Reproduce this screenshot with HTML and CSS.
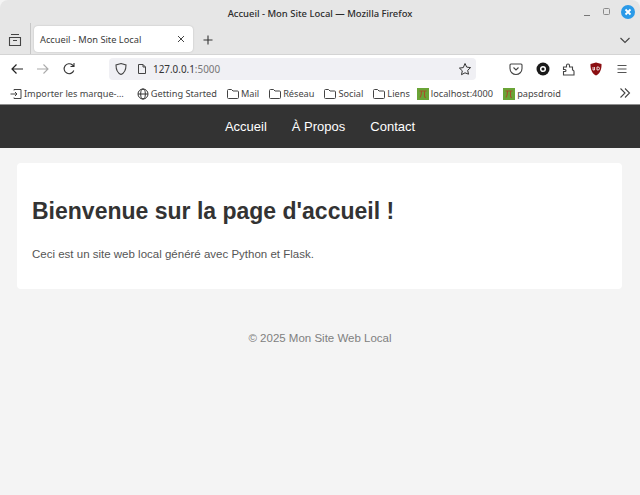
FILE: index.html
```html
<!DOCTYPE html>
<html lang="fr">
<head>
<meta charset="utf-8">
<title>Accueil - Mon Site Local</title>
<link rel="stylesheet" href="styles.css">
</head>
<body>
<div class="chrome">
  <div class="titlebar">
    <span class="title">Accueil - Mon Site Local — Mozilla Firefox</span>
    <div class="winctl">
      <svg class="ico-min" width="10" height="10" viewBox="0 0 10 10"><path d="M1 8.500h6" stroke="#777" fill="none"/></svg>
      <svg class="ico-max" width="10" height="10" viewBox="0 0 10 10"><rect x="1.500" y="1.500" width="6" height="6" rx="1" stroke="#8a8a8a" fill="none"/></svg>
      <svg class="ico-close" width="14" height="14" viewBox="0 0 14 14"><circle cx="7" cy="7" r="7" fill="#2a9ae8"/><path d="M4.500 4.500l5 5M9.500 4.500l-5 5" stroke="#fff" stroke-width="1.800" fill="none"/></svg>
    </div>
  </div>
  <div class="tabbar">
    <svg class="ico-view" width="14" height="14" viewBox="0 0 14 14"><path d="M3 1.500h8M1.500 4.500h11v8h-11zM5 7.500h4" stroke="#444" stroke-width="1.100" fill="none"/></svg>
    <span class="sep"></span>
    <div class="tab">
      <span class="tab-title">Accueil - Mon Site Local</span>
      <svg width="8" height="8" viewBox="0 0 8 8"><path d="M1 1l6 6M7 1l-6 6" stroke="#444" fill="none"/></svg>
    </div>
    <svg class="ico-plus" width="12" height="12" viewBox="0 0 12 12"><path d="M6 1.500v9M1.500 6h9" stroke="#333" stroke-width="1.100" fill="none"/></svg>
    <svg class="ico-chev" width="12" height="12" viewBox="0 0 12 12"><path d="M1.500 4l4.500 4.500 4.500-4.500" stroke="#444" stroke-width="1.100" fill="none"/></svg>
  </div>
  <div class="toolbar">
    <svg class="nav-ico" width="14" height="14" viewBox="0 0 14 14"><path d="M13 7H2M6.500 2.500L2 7l4.500 4.500" stroke="#222" stroke-width="1.200" fill="none"/></svg>
    <svg class="nav-ico" width="14" height="14" viewBox="0 0 14 14"><path d="M1 7h11M7.500 2.500L12 7l-4.500 4.500" stroke="#aaa" stroke-width="1.100" fill="none"/></svg>
    <svg class="nav-ico" width="14" height="14" viewBox="0 0 14 14"><path d="M11.800 8.500A5 5 0 1 1 10.500 3L12 4.500M12 1v3.500H8.500" stroke="#333" stroke-width="1.100" fill="none"/></svg>
    <div class="urlbar">
      <svg width="14" height="14" viewBox="0 0 14 14"><path d="M7 1.500l5 1.500c0 5-1.500 8-5 9.500C3.500 11 2 8 2 3z" stroke="#444" stroke-width="1.100" fill="none"/></svg>
      <svg width="12" height="12" viewBox="0 0 12 12"><path d="M2.500 1.500h4.500l2.500 2.500v6.500h-7zM7 1.500v2.500h2.500" stroke="#444" fill="none"/></svg>
      <span class="url">127.0.0.1<span class="port">:5000</span></span>
      <svg class="ico-star" width="14" height="14" viewBox="0 0 14 14"><path d="M7 1.500l1.700 3.600 3.900.5-2.900 2.700.8 3.900L7 10.800l-3.500 1.900.8-3.900-2.900-2.700 3.900-.5z" stroke="#333" fill="none"/></svg>
    </div>
    <div class="tools">
      <svg width="14" height="14" viewBox="0 0 14 14"><path d="M2 2h10a1 1 0 0 1 1 1v3.500a6 6 0 0 1-12 0V3a1 1 0 0 1 1-1zM4.500 5.500L7 8l2.500-2.500" stroke="#444" stroke-width="1.100" fill="none"/></svg>
      <svg width="14" height="14" viewBox="0 0 14 14"><circle cx="7" cy="7" r="6.500" fill="#1a1a1a"/><circle cx="7" cy="7" r="2.300" fill="none" stroke="#fff" stroke-width="1.500"/></svg>
      <svg width="14" height="14" viewBox="0 0 14 14"><path d="M1.500 5h3V3.500a1.500 1.500 0 0 1 3 0V5h3v3a1.500 1.500 0 0 1 1.500 1.500V13H1.500v-3.500h1.500a1 1 0 0 0 0-2H1.500z" stroke="#444" stroke-width="1.100" fill="none"/></svg>
      <svg width="14" height="14" viewBox="0 0 14 14"><path d="M7 .5l5.500 1.500c.2 5.500-1.500 9.500-5.500 11.500C3 11.500 1.300 7.500 1.500 2z" fill="#8b0f12"/><path d="M4 5v3h1.500V5M8 5v3h1a1.500 1.500 0 0 0 0-3z" stroke="#fff" stroke-width=".8" fill="none"/></svg>
      <svg width="14" height="14" viewBox="0 0 14 14"><path d="M2.500 3.500h9M2.500 7h9M2.500 10.500h9" stroke="#555" stroke-width="1.100" fill="none"/></svg>
    </div>
  </div>
  <div class="bookmarks">
    <span class="bm bm-import"><svg width="12" height="12" viewBox="0 0 12 12"><path d="M4 2.500V1.500h7v9H4v-1M.5 6H7M5 4l2 2-2 2" stroke="#444" fill="none"/></svg>Importer les marque-…</span>
    <span class="bm"><svg width="12" height="12" viewBox="0 0 12 12"><circle cx="6" cy="6" r="5" stroke="#333" fill="none"/><ellipse cx="6" cy="6" rx="2.300" ry="5" stroke="#333" fill="none"/><path d="M1 6h10" stroke="#333" fill="none"/></svg>Getting Started</span>
    <span class="bm"><svg width="12" height="12" viewBox="0 0 12 12"><use href="#folder"/></svg>Mail</span>
    <span class="bm"><svg width="12" height="12" viewBox="0 0 12 12"><use href="#folder"/></svg>Réseau</span>
    <span class="bm"><svg width="12" height="12" viewBox="0 0 12 12"><use href="#folder"/></svg>Social</span>
    <span class="bm bm-liens"><svg width="12" height="12" viewBox="0 0 12 12"><use href="#folder"/></svg>Liens</span>
    <span class="bm"><svg width="12" height="12" viewBox="0 0 12 12"><use href="#pi"/></svg>localhost:4000</span>
    <span class="bm"><svg width="12" height="12" viewBox="0 0 12 12"><use href="#pi"/></svg>papsdroid</span>
    <svg class="ico-more" width="12" height="12" viewBox="0 0 12 12"><path d="M1.500 1.500L6 6l-4.500 4.500M6 1.500L10.500 6 6 10.500" stroke="#444" stroke-width="1.100" fill="none"/></svg>
  </div>
</div>
<svg class="defs" width="0" height="0">
  <defs>
    <g id="folder"><path d="M.5 2.500a1 1 0 0 1 1-1h3l1.500 1.500h4.500a1 1 0 0 1 1 1v5.500a1 1 0 0 1-1 1h-9a1 1 0 0 1-1-1z" stroke="#444" fill="none"/></g>
    <g id="pi"><rect width="12" height="12" fill="#6aa436"/><path d="M2.500 3h7M4.500 3c0 3-.5 5-1.500 6.500M7.500 3v5c0 1 .5 1.500 1.500 1.500" stroke="#a5502a" stroke-width="1.100" fill="none"/></g>
  </defs>
</svg>
<nav class="site-nav">
  <a href="#">Accueil</a>
  <a href="#">À Propos</a>
  <a href="#">Contact</a>
</nav>
<main class="card">
  <h1>Bienvenue sur la page d'accueil !</h1>
  <p>Ceci est un site web local généré avec Python et Flask.</p>
</main>
<footer class="site-footer">© 2025 Mon Site Web Local</footer>
</body>
</html>
```
FILE: styles.css
```css
* { box-sizing: border-box; }
html, body { margin: 0; height: 100%; }
body {
  background: #f4f4f4;
  font-family: "Liberation Sans", Arial, sans-serif;
  overflow: hidden;
}
svg { display: block; flex: none; }
.defs { position: absolute; }

.chrome { font-family: "Noto Sans", "Open Sans", sans-serif; color: #333; }
.titlebar {
  height: 26px;
  background: #e6e6e6;
  border-radius: 8px 8px 0 0;
  display: flex;
  align-items: center;
  justify-content: center;
  position: relative;
}
.title { font-size: 9.450px; color: #2b2b2b; font-weight: 500; }
.winctl {
  position: absolute;
  right: 5px;
  top: 5px;
  display: flex;
  align-items: center;
  gap: 9px;
}
.tabbar {
  height: 29px;
  background: #e6e6e6;
  border-bottom: 1px solid #d4d4d4;
  display: flex;
  align-items: center;
  padding: 0 8px;
  position: relative;
}
.sep { width: 1px; height: 31px; background: #c6c6c6; margin: -3px 3px 0 8px; }
.tab {
  width: 159px;
  height: 26px;
  margin-bottom: 2px;
  background: #fff;
  border-radius: 4px;
  box-shadow: 0 0 2px rgba(0,0,0,.2);
  display: flex;
  align-items: center;
  justify-content: space-between;
  padding: 0 8px 0 6px;
}
.tab-title { font-size: 9.250px; color: #3a3a3a; }
.ico-plus { margin-left: 9px; }
.ico-chev { margin-left: auto; margin-right: 1px; }

.toolbar {
  height: 27px;
  background: #fff;
  display: flex;
  align-items: center;
  padding: 0 0 0 10px;
}
.nav-ico { margin-right: 12px; }
.urlbar {
  width: 367px;
  height: 22px;
  margin-left: 21px;
  background: #f0f0f4;
  border-radius: 4px;
  display: flex;
  align-items: center;
  padding: 0 4px 0 5px;
  gap: 8px;
}
.url { font-size: 9.900px; color: #333; margin-left: -3px; }
.port { color: #777; }
.ico-star { margin-left: auto; }
.tools {
  display: flex;
  align-items: center;
  gap: 12.500px;
  margin-left: 33px;
}
.bookmarks {
  height: 23px;
  padding: 1px 0 0 10px;
  background: #fff;
  border-bottom: 1px solid #8f8f8f;
  display: flex;
  align-items: center;
  gap: 10px;
  position: relative;
  font-size: 9.200px;
  color: #444;
  white-space: nowrap;
}
.bm { display: flex; align-items: center; gap: 2px; }
.bm-import { margin-right: 3px; }
.bm-liens { margin-right: -3px; }
.ico-more { position: absolute; right: 9px; top: 5px; }

.site-nav {
  height: 43px;
  background: #333;
  display: flex;
  justify-content: center;
  align-items: center;
  gap: 25px;
}
.site-nav a { color: #fff; text-decoration: none; font-size: 13px; }

.card {
  margin: 15px 18px 0 17px;
  height: 126px;
  background: #fff;
  border-radius: 4px;
  padding: 0 15px;
  overflow: hidden;
}
.card h1 {
  margin: 32px 0 0;
  font-size: 23px;
  line-height: 32px;
  font-weight: bold;
  color: #333;
}
.card p {
  margin: 19px 0 0;
  font-size: 11.500px;
  line-height: 16px;
  color: #555;
}
.site-footer {
  margin-top: 41px;
  text-align: center;
  font-size: 11.500px;
  line-height: 16px;
  color: #808080;
}
```
